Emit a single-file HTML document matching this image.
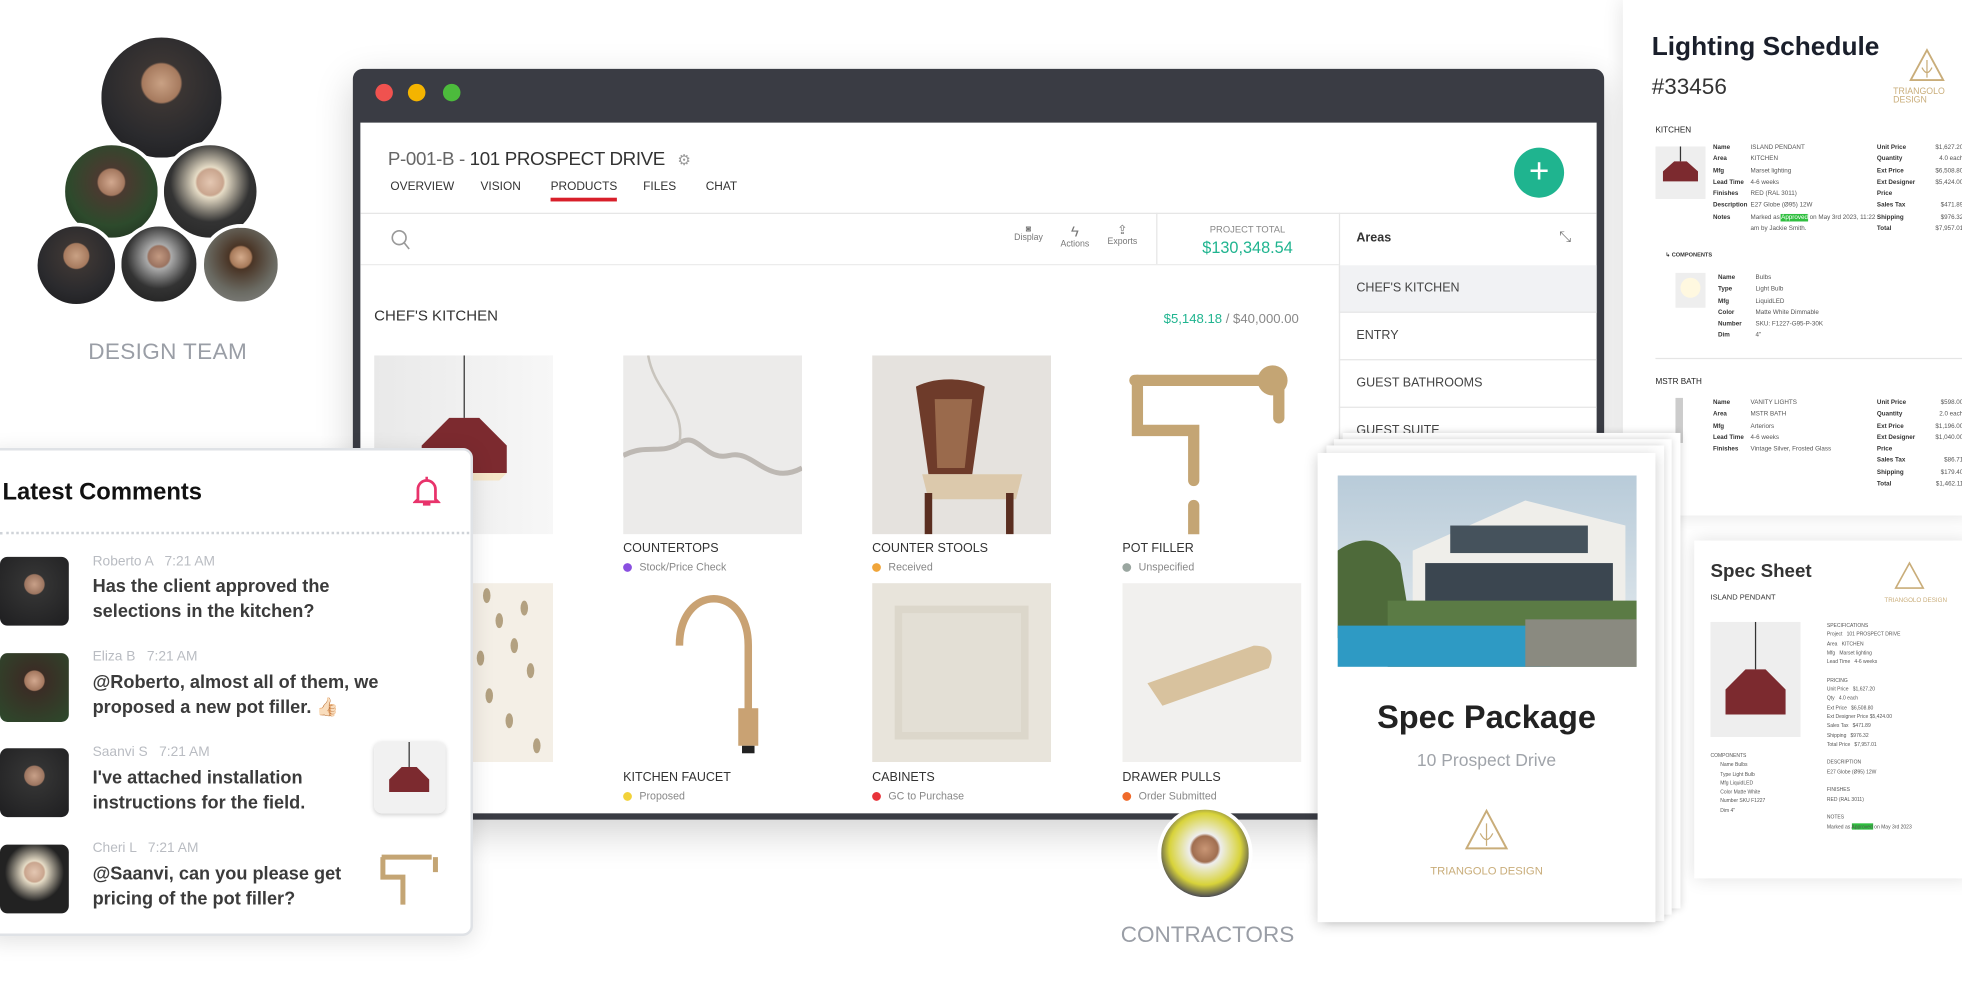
<!DOCTYPE html>
<html><head><meta charset="utf-8">
<style>
*{margin:0;padding:0;box-sizing:border-box}
html,body{width:1962px;height:981px;overflow:hidden;background:#fff;font-family:"Liberation Sans",sans-serif}
#w{position:absolute;left:0;top:0;width:1568px;height:784px;transform:scale(1.25128);transform-origin:0 0}
.a{position:absolute}
.av{position:absolute;border-radius:50%;border:3px solid #fff;overflow:hidden;background:radial-gradient(circle at 50% 38%,#c9a184 0,#a67a5e 20%,#3b3533 22%,#2a2a2d 60%,#1a1a1c 100%)}
.lbl{font-size:10px;color:#333;text-transform:uppercase}
.st{font-size:8.5px;color:#888;margin-top:4px}
.st i{display:inline-block;width:7px;height:7px;border-radius:50%;margin-right:6px;vertical-align:-1px}
.img{position:absolute;width:143px;height:143px}
.area{position:absolute;left:1070px;width:206px;height:38px;border-bottom:1px solid #e6e6e6;font-size:10px;color:#444;padding:0 14px;line-height:38px}
.cm{position:absolute;left:0;width:377px}
.cm .p{position:absolute;left:0;width:55px;height:55px;border-radius:6px;background:radial-gradient(circle at 50% 40%,#c8a088 0,#9c7560 18%,#333 20%,#1e1e20 100%)}
.cm .n{position:absolute;left:74px;font-size:11px;color:#b9bcc2}
.cm .t{position:absolute;left:74px;font-size:14.5px;font-weight:bold;color:#3b3b3b;line-height:20px}
.doc td{padding:0 6px 0 0;font-size:5px;line-height:9px;color:#333}
</style></head><body><div id="w">

<!-- design team -->
<div class="av" style="left:78px;top:27px;width:102px;height:102px"></div>
<div class="av" style="left:49px;top:113px;width:80px;height:80px;background:radial-gradient(circle at 50% 40%,#d2a88f 0,#a4785f 18%,#4a3a30 20%,#2d4a2c 60%,#1d2a1c)"></div>
<div class="av" style="left:128px;top:113px;width:80px;height:80px;background:radial-gradient(circle at 50% 40%,#e4c7b2 0,#c9a58e 18%,#e6dcc6 21%,#333 55%,#222)"></div>
<div class="av" style="left:27px;top:178px;width:68px;height:68px"></div>
<div class="av" style="left:94px;top:178px;width:66px;height:66px;background:radial-gradient(circle at 50% 40%,#c39a82 0,#9b7360 18%,#aaa 21%,#333 55%,#1b1b1b)"></div>
<div class="av" style="left:160px;top:179px;width:65px;height:65px;background:radial-gradient(circle at 50% 40%,#d4ab8c 0,#a77a5a 18%,#4a3526 21%,#6a6a62 60%,#888)"></div>
<div class="a" style="left:0;width:268px;top:271px;text-align:center;font-size:18px;color:#9a9ea6;letter-spacing:.3px">DESIGN TEAM</div>

<!-- browser -->
<div class="a" style="left:282px;top:55px;width:1000px;height:600px;background:#3a3c44;border-radius:8px;box-shadow:0 10px 30px rgba(0,0,0,.18)"></div>
<div class="a" style="left:300px;top:67px;width:14px;height:14px;border-radius:50%;background:#f0524f"></div>
<div class="a" style="left:326px;top:67px;width:14px;height:14px;border-radius:50%;background:#f4b400"></div>
<div class="a" style="left:354px;top:67px;width:14px;height:14px;border-radius:50%;background:#4cbb3c"></div>
<div class="a" style="left:288px;top:98px;width:988px;height:552px;background:#fff;overflow:hidden">
  <div class="a" style="left:22px;top:21px;font-size:15px;color:#666;letter-spacing:-.3px">P-001-B - <span style="color:#333">101 PROSPECT DRIVE</span> <span style="color:#999;font-size:12px;margin-left:6px">⚙</span></div>
  <div class="a" style="left:24px;top:46px;font-size:9.5px;color:#333;word-spacing:0">
    <span style="position:absolute;left:0">OVERVIEW</span><span style="position:absolute;left:72px">VISION</span><span style="position:absolute;left:128px;border-bottom:3px solid #d81f2a;padding-bottom:3px">PRODUCTS</span><span style="position:absolute;left:202px">FILES</span><span style="position:absolute;left:252px">CHAT</span></div>
  <div class="a" style="left:922px;top:20px;width:40px;height:40px;border-radius:50%;background:#1fb48f;color:#fff;font-size:28px;line-height:38px;text-align:center;font-weight:300">+</div>
  <div class="a" style="left:0;top:72px;width:988px;height:1px;background:#e6e6e6"></div>
  <div class="a" style="left:0;top:113px;width:782px;height:1px;background:#ececec"></div>
  <div class="a" style="left:636px;top:72px;width:1px;height:41px;background:#e6e6e6"></div>
  <div class="a" style="left:782px;top:72px;width:1px;height:480px;background:#e6e6e6"></div>
  <svg class="a" style="left:24px;top:85px" width="16" height="18"><circle cx="7" cy="7" r="5.5" fill="none" stroke="#999" stroke-width="1.3"/><path d="M11 11l4 5" stroke="#999" stroke-width="1.3"/></svg>
  <div class="a" style="left:522px;top:82px;font-size:7px;color:#777;text-align:center;width:24px">◙<br>Display</div>
  <div class="a" style="left:559px;top:80px;font-size:7px;color:#777;text-align:center;width:24px"><span style="font-size:12px">ϟ</span><br>Actions</div>
  <div class="a" style="left:597px;top:81px;font-size:7px;color:#777;text-align:center;width:24px"><span style="font-size:10px">⇪</span><br>Exports</div>
  <div class="a" style="left:636px;top:81px;width:146px;text-align:center;font-size:7.5px;color:#888">PROJECT TOTAL</div>
  <div class="a" style="left:636px;top:92px;width:146px;text-align:center;font-size:13px;color:#1fb48f">$130,348.54</div>
  <div class="a" style="left:796px;top:87px;font-size:10px;color:#333;font-weight:bold">Areas</div>
  <div class="a" style="left:958px;top:84px;font-size:12px;color:#777">⤡</div>
  <div class="a" style="left:11px;top:147px;font-size:12px;color:#333">CHEF'S KITCHEN</div>
  <div class="a" style="left:600px;top:151px;font-size:10.5px;color:#888;width:150px;text-align:right"><span style="color:#1fb48f">$5,148.18</span> / $40,000.00</div>
</div>
<div class="area" style="top:212px;background:#f1f2f4">CHEF'S KITCHEN</div>
<div class="area" style="top:250px">ENTRY</div>
<div class="area" style="top:288px">GUEST BATHROOMS</div>
<div class="area" style="top:326px">GUEST SUITE</div>
<div class="a" style="left:1070px;top:212px;width:1px;height:438px;background:#e6e6e6"></div>

<!-- products -->
<svg class="img" style="left:299px;top:284px" viewBox="0 0 143 143"><defs><linearGradient id="g1" x1="0" x2="1"><stop offset="0" stop-color="#e9e9e9"/><stop offset="1" stop-color="#f7f7f7"/></linearGradient></defs><rect width="143" height="143" fill="url(#g1)"/><line x1="72" y1="0" x2="72" y2="50" stroke="#333"/><path d="M60 50h24l22 22v22H38V72z" fill="#7c2a2f"/><path d="M38 94h68l-6 6H44z" fill="#f5e6c8"/></svg>
<svg class="img" style="left:498px;top:284px" viewBox="0 0 143 143"><rect width="143" height="143" fill="#ecebea"/><path d="M0 80c20-10 30 0 45-10s20 15 40 10 30 25 58 10" stroke="#a9a39b" stroke-width="4" fill="none" opacity=".7"/><path d="M20 0c5 30 30 40 25 70" stroke="#c8c4bd" stroke-width="2" fill="none"/></svg>
<svg class="img" style="left:697px;top:284px" viewBox="0 0 143 143"><rect width="143" height="143" fill="#e5e2de"/><path d="M35 25c20-10 45-5 55 0l-10 70H45z" fill="#6e3b2a"/><path d="M50 35h30l-6 55H52z" fill="#9a6a4c"/><path d="M40 95h80l-5 20H45z" fill="#dcc9ac"/><path d="M45 110v33M110 110v33" stroke="#5a2e20" stroke-width="6"/></svg>
<svg class="img" style="left:897px;top:284px" viewBox="0 0 143 143"><rect width="143" height="143" fill="#fff"/><g stroke="#c4a574" stroke-width="9" fill="none" stroke-linecap="round"><path d="M10 20h100"/><path d="M12 20v40h45v40"/><path d="M125 20v30"/><path d="M57 120v30"/></g><circle cx="120" cy="20" r="12" fill="#c4a574"/></svg>
<div class="a" style="left:498px;top:433px"><div class="lbl">COUNTERTOPS</div><div class="st"><i style="background:#8a4fe0"></i>Stock/Price Check</div></div>
<div class="a" style="left:697px;top:433px"><div class="lbl">COUNTER STOOLS</div><div class="st"><i style="background:#f0a53a"></i>Received</div></div>
<div class="a" style="left:897px;top:433px"><div class="lbl">POT FILLER</div><div class="st"><i style="background:#9aa6a0"></i>Unspecified</div></div>
<svg class="img" style="left:299px;top:466px" viewBox="0 0 143 143"><rect width="143" height="143" fill="#f4efe6"/><g fill="#b3a181"><ellipse cx="90" cy="10" rx="3" ry="6"/><ellipse cx="100" cy="30" rx="3" ry="6"/><ellipse cx="112" cy="50" rx="3" ry="6"/><ellipse cx="125" cy="70" rx="3" ry="6"/><ellipse cx="92" cy="90" rx="3" ry="6"/><ellipse cx="108" cy="110" rx="3" ry="6"/><ellipse cx="130" cy="130" rx="3" ry="6"/><ellipse cx="85" cy="60" rx="3" ry="6"/><ellipse cx="120" cy="20" rx="3" ry="6"/></g></svg>
<svg class="img" style="left:498px;top:466px" viewBox="0 0 143 143"><rect width="143" height="143" fill="#fff"/><path d="M45 50c0-50 55-50 55 0v60" stroke="#c9a273" stroke-width="6" fill="none"/><rect x="92" y="100" width="16" height="30" fill="#c9a273"/><rect x="95" y="130" width="10" height="6" fill="#222"/></svg>
<svg class="img" style="left:697px;top:466px" viewBox="0 0 143 143"><rect width="143" height="143" fill="#e8e4db"/><rect x="18" y="18" width="107" height="107" fill="#dcd7cb"/><rect x="24" y="24" width="95" height="95" fill="#e3dfd5"/></svg>
<svg class="img" style="left:897px;top:466px" viewBox="0 0 143 143"><rect width="143" height="143" fill="#f1f0ee"/><path d="M20 80l85-30q20 0 12 18l-85 30z" fill="#d8c29e"/></svg>
<div class="a" style="left:498px;top:616px"><div class="lbl">KITCHEN FAUCET</div><div class="st"><i style="background:#f2d23a"></i>Proposed</div></div>
<div class="a" style="left:697px;top:616px"><div class="lbl">CABINETS</div><div class="st"><i style="background:#e8333a"></i>GC to Purchase</div></div>
<div class="a" style="left:897px;top:616px"><div class="lbl">DRAWER PULLS</div><div class="st"><i style="background:#f06a2a"></i>Order Submitted</div></div>

<!-- comments -->
<div class="a" style="left:-10px;top:358px;width:388px;height:390px;background:#fff;border:2px solid #dfe2e6;border-radius:8px;box-shadow:0 4px 18px rgba(0,0,0,.12)"></div>
<div class="a" style="left:2px;top:383px;font-size:19px;font-weight:bold;color:#111">Latest Comments</div>
<svg class="a" style="left:330px;top:380px" width="22" height="26"><path d="M4 19V11a7 7 0 0114 0v8l2 2H2z" fill="none" stroke="#e8336b" stroke-width="2.2"/><path d="M8 23h6" stroke="#e8336b" stroke-width="2.2"/><path d="M11 1v3" stroke="#e8336b" stroke-width="2"/></svg>
<div class="a" style="left:0;top:425px;width:375px;border-top:2px dotted #cfd3d8"></div>
<div class="cm" style="top:445px"><div class="p"></div><div class="n" style="top:-2px">Roberto A &nbsp; 7:21 AM</div><div class="t" style="top:14px">Has the client approved the<br>selections in the kitchen?</div></div>
<div class="cm" style="top:522px"><div class="p" style="background:radial-gradient(circle at 50% 40%,#d2a88f 0,#a4785f 18%,#3a2d25 20%,#2d4a2c 100%)"></div><div class="n" style="top:-3px">Eliza B &nbsp; 7:21 AM</div><div class="t" style="top:14px">@Roberto, almost all of them, we<br>proposed a new pot filler. 👍🏻</div></div>
<div class="cm" style="top:598px"><div class="p"></div><div class="n" style="top:-3px">Saanvi S &nbsp; 7:21 AM</div><div class="t" style="top:14px">I've attached installation<br>instructions for the field.</div>
<svg class="a" style="left:299px;top:-5px;border-radius:6px;box-shadow:0 1px 4px rgba(0,0,0,.2)" width="57" height="57" viewBox="0 0 57 57"><rect width="57" height="57" fill="#f1f1f1"/><line x1="28" y1="0" x2="28" y2="20" stroke="#333"/><path d="M22 20h12l10 10v10H12V30z" fill="#7c2a2f"/></svg></div>
<div class="cm" style="top:675px"><div class="p" style="background:radial-gradient(circle at 50% 40%,#e4c7b2 0,#c9a58e 18%,#e6dcc6 21%,#222 55%)"></div><div class="n" style="top:-3px">Cheri L &nbsp; 7:21 AM</div><div class="t" style="top:14px">@Saanvi, can you please get<br>pricing of the pot filler?</div>
<svg class="a" style="left:300px;top:0" width="54" height="54"><g stroke="#c4a574" stroke-width="4" fill="none"><path d="M5 10h40M6 10v16h16v22M48 10v12"/></g></svg></div>

<!-- contractor -->
<div class="av" style="left:925px;top:644px;width:76px;height:76px;background:radial-gradient(circle at 50% 45%,#c99675 0,#a06e50 20%,#eee 24%,#d8d33a 55%,#445 75%,#6a5a4a)"></div>
<div class="a" style="left:880px;top:737px;width:170px;text-align:center;font-size:18px;color:#9a9ea6">CONTRACTORS</div>

<!-- lighting schedule -->
<div class="a doc" style="left:1297px;top:0;width:280px;height:412px;background:#fff;box-shadow:0 0 16px rgba(0,0,0,.12)">
  <div class="a" style="left:23px;top:26px;font-size:21px;font-weight:bold;color:#1a1f2b">Lighting Schedule</div>
  <div class="a" style="left:23px;top:59px;font-size:18px;color:#333">#33456</div>
  <svg class="a" style="left:228px;top:38px" width="30" height="28"><path d="M15 2L28 26H2z" fill="none" stroke="#c9ad7a" stroke-width="1.5"/><path d="M15 10v14M11 16q4 8 8 0" stroke="#c9ad7a" fill="none"/></svg>
  <div class="a" style="left:216px;top:70px;font-size:7px;color:#c9ad7a">TRIANGOLO DESIGN</div>
  <div class="a" style="left:26px;top:101px;font-size:6.5px;color:#222">KITCHEN</div>
  <svg class="a" style="left:26px;top:117px" width="40" height="42"><rect width="40" height="42" fill="#eee"/><line x1="20" y1="0" x2="20" y2="12" stroke="#333"/><path d="M15 12h10l9 8v8H6v-8z" fill="#7c2a2f"/></svg>
  <div class="a" style="left:72px;top:114px;font-size:5px;line-height:9.3px;color:#333"><b>Name<br>Area<br>Mfg<br>Lead Time<br>Finishes<br>Description<br>Notes</b></div>
  <div class="a" style="left:102px;top:114px;font-size:5px;line-height:9.3px;color:#555">ISLAND PENDANT<br>KITCHEN<br>Marset lighting<br>4-6 weeks<br>RED (RAL 3011)<br>E27 Globe (Ø95) 12W<br>Marked as <span style="background:#2fbf3f;color:#fff">Approved</span> on May 3rd 2023, 11:22<br>am by Jackie Smith.</div>
  <div class="a" style="left:203px;top:114px;font-size:5px;line-height:9.3px;color:#333"><b>Unit Price<br>Quantity<br>Ext Price<br>Ext Designer<br>Price<br>Sales Tax<br>Shipping<br>Total</b></div>
  <div class="a" style="left:240px;top:114px;font-size:5px;line-height:9.3px;color:#555;text-align:right;width:32px">$1,627.20<br>4.0 each<br>$6,508.80<br>$5,424.00<br><br>$471.89<br>$976.32<br>$7,957.01</div>
  <div class="a" style="left:34px;top:201px;font-size:4.5px;color:#333;font-weight:bold">↳ COMPONENTS</div>
  <svg class="a" style="left:42px;top:218px" width="24" height="28"><rect width="24" height="28" fill="#eee"/><circle cx="12" cy="12" r="8" fill="#fff8e0"/></svg>
  <div class="a" style="left:76px;top:218px;font-size:5px;line-height:9.3px;color:#333"><b>Name<br>Type<br>Mfg<br>Color<br>Number<br>Dim</b></div>
  <div class="a" style="left:106px;top:218px;font-size:5px;line-height:9.3px;color:#555">Bulbs<br>Light Bulb<br>LiquidLED<br>Matte White Dimmable<br>SKU: F1227-G95-P-30K<br>4"</div>
  <div class="a" style="left:26px;top:286px;width:250px;height:1px;background:#e5e5e5"></div>
  <div class="a" style="left:26px;top:302px;font-size:6.5px;color:#222">MSTR BATH</div>
  <div class="a" style="left:42px;top:318px;width:6px;height:36px;background:#ccc"></div>
  <div class="a" style="left:72px;top:318px;font-size:5px;line-height:9.3px;color:#333"><b>Name<br>Area<br>Mfg<br>Lead Time<br>Finishes</b></div>
  <div class="a" style="left:102px;top:318px;font-size:5px;line-height:9.3px;color:#555">VANITY LIGHTS<br>MSTR BATH<br>Arteriors<br>4-6 weeks<br>Vintage Silver, Frosted Glass</div>
  <div class="a" style="left:203px;top:318px;font-size:5px;line-height:9.3px;color:#333"><b>Unit Price<br>Quantity<br>Ext Price<br>Ext Designer<br>Price<br>Sales Tax<br>Shipping<br>Total</b></div>
  <div class="a" style="left:240px;top:318px;font-size:5px;line-height:9.3px;color:#555;text-align:right;width:32px">$598.00<br>2.0 each<br>$1,196.00<br>$1,040.00<br><br>$86.71<br>$179.40<br>$1,462.11</div>
</div>

<!-- spec sheet -->
<div class="a" style="left:1354px;top:432px;width:220px;height:270px;background:#fff;box-shadow:0 0 14px rgba(0,0,0,.12)">
  <div class="a" style="left:13px;top:16px;font-size:15px;font-weight:bold;color:#333">Spec Sheet</div>
  <div class="a" style="left:13px;top:43px;font-size:6px;color:#333">ISLAND PENDANT</div>
  <svg class="a" style="left:160px;top:16px" width="24" height="24"><path d="M12 2L23 22H1z" fill="none" stroke="#c9ad7a" stroke-width="1.3"/></svg>
  <div class="a" style="left:152px;top:45px;font-size:5px;color:#c9ad7a">TRIANGOLO DESIGN</div>
  <svg class="a" style="left:13px;top:65px" width="72" height="92"><rect width="72" height="92" fill="#eee"/><line x1="36" y1="0" x2="36" y2="38" stroke="#333"/><path d="M28 38h16l16 16v20H12V54z" fill="#7c2a2f"/></svg>
  <div class="a" style="left:106px;top:64px;font-size:4px;line-height:7.3px;color:#555">SPECIFICATIONS<br>Project &nbsp; 101 PROSPECT DRIVE<br>Area &nbsp; KITCHEN<br>Mfg &nbsp; Marset lighting<br>Lead Time &nbsp; 4-6 weeks<br><br>PRICING<br>Unit Price &nbsp; $1,627.20<br>Qty &nbsp; 4.0 each<br>Ext Price &nbsp; $6,508.80<br>Ext Designer Price $5,424.00<br>Sales Tax &nbsp; $471.89<br>Shipping &nbsp; $976.32<br>Total Price &nbsp; $7,957.01<br><br>DESCRIPTION<br>E27 Globe (Ø95) 12W<br><br>FINISHES<br>RED (RAL 3011)<br><br>NOTES<br>Marked as <span style="background:#2fbf3f">Approved</span> on May 3rd 2023</div>
  <div class="a" style="left:13px;top:168px;font-size:4px;line-height:7.3px;color:#555">COMPONENTS<br>&nbsp;&nbsp;&nbsp;&nbsp;&nbsp;&nbsp;&nbsp;Name Bulbs<br>&nbsp;&nbsp;&nbsp;&nbsp;&nbsp;&nbsp;&nbsp;Type Light Bulb<br>&nbsp;&nbsp;&nbsp;&nbsp;&nbsp;&nbsp;&nbsp;Mfg LiquidLED<br>&nbsp;&nbsp;&nbsp;&nbsp;&nbsp;&nbsp;&nbsp;Color Matte White<br>&nbsp;&nbsp;&nbsp;&nbsp;&nbsp;&nbsp;&nbsp;Number SKU F1227<br>&nbsp;&nbsp;&nbsp;&nbsp;&nbsp;&nbsp;&nbsp;Dim 4"</div>
</div>

<!-- spec package -->
<div class="a" style="left:1073px;top:346px;width:270px;height:380px;background:#fff;box-shadow:0 0 6px rgba(0,0,0,.18)"></div>
<div class="a" style="left:1066px;top:351px;width:270px;height:380px;background:#fff;box-shadow:0 0 6px rgba(0,0,0,.18)"></div>
<div class="a" style="left:1060px;top:356px;width:270px;height:380px;background:#fff;box-shadow:0 0 6px rgba(0,0,0,.18)"></div>
<div class="a" style="left:1053px;top:362px;width:270px;height:375px;background:#fff;box-shadow:0 2px 10px rgba(0,0,0,.2)">
  <svg class="a" style="left:16px;top:18px" width="239" height="153" viewBox="0 0 239 153"><defs><linearGradient id="sk" x1="0" y1="0" x2="0" y2="1"><stop offset="0" stop-color="#b8cbd9"/><stop offset="1" stop-color="#e6ecef"/></linearGradient></defs><rect width="239" height="153" fill="url(#sk)"/><path d="M0 60q30-20 50 10l10 60H0z" fill="#4e6a3a"/><path d="M60 60l90-40 80 20v70H60z" fill="#efeeea"/><rect x="70" y="70" width="150" height="35" fill="#3b4650"/><rect x="90" y="40" width="110" height="22" fill="#45525c"/><path d="M40 100h199v53H40z" fill="#5b7b45"/><path d="M0 120h180l-10 33H0z" fill="#2e9ac4"/><path d="M150 115h89v38h-89z" fill="#8a8a80"/></svg>
  <div class="a" style="left:0;width:270px;top:196px;text-align:center;font-size:26px;font-weight:bold;color:#222">Spec Package</div>
  <div class="a" style="left:0;width:270px;top:237px;text-align:center;font-size:14px;color:#a0a4aa">10 Prospect Drive</div>
  <svg class="a" style="left:117px;top:284px" width="36" height="34"><path d="M18 2L34 32H2z" fill="none" stroke="#c9ad7a" stroke-width="1.6"/><path d="M18 12v18M13 20q5 10 10 0" stroke="#c9ad7a" fill="none"/></svg>
  <div class="a" style="left:0;width:270px;top:329px;text-align:center;font-size:9px;color:#c9ad7a">TRIANGOLO DESIGN</div>
</div>

</div></body></html>
